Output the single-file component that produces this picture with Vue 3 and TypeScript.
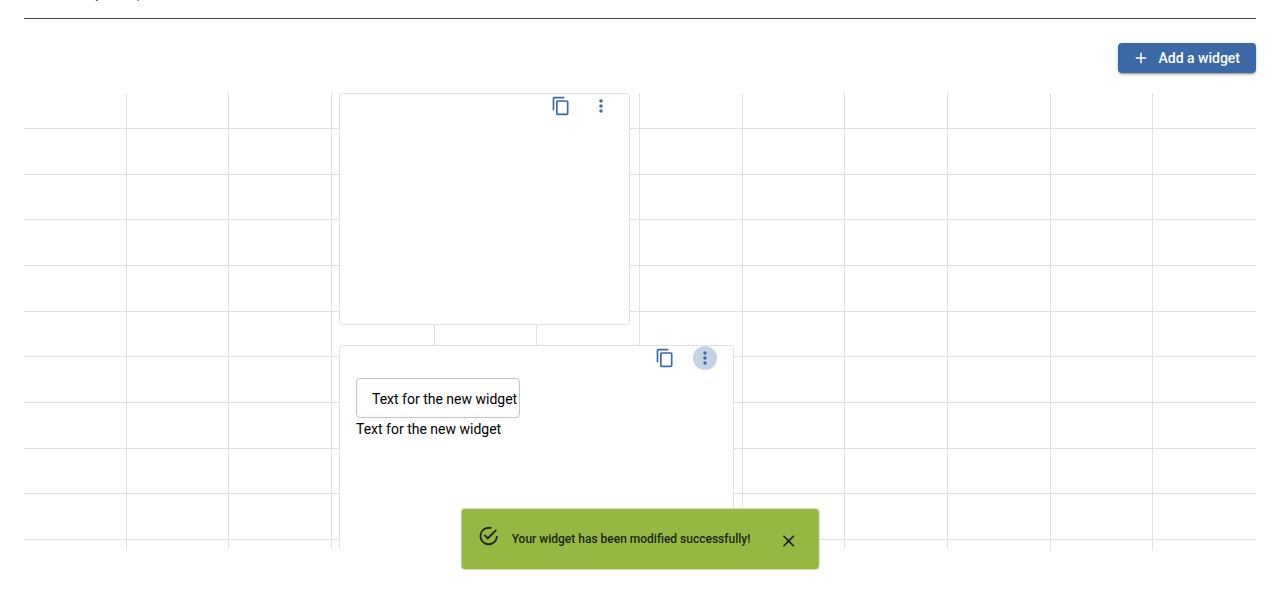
<script setup lang="ts">
import { ref } from 'vue'

interface Widget {
  id: number
  size: 'regular' | 'wide'
  text: string
  active: boolean
}

const columnCount = 12
const rowCount = 11

const widgets = ref<Widget[]>([
  { id: 1, size: 'regular', text: '', active: false },
  { id: 2, size: 'wide', text: 'Text for the new widget', active: true },
])
const toastOpen = ref(true)
</script>

<template>
  <main class="page">
    <header class="intro">
      <p class="description">Dashboard my description</p>
    </header>

    <div class="toolbar">
      <button class="add" type="button">
        <svg class="add-icon" viewBox="0 0 24 24" aria-hidden="true">
          <path d="M19 13h-6v6h-2v-6H5v-2h6V5h2v6h6v2z" />
        </svg>
        Add a widget
      </button>
    </div>

    <section class="board" aria-label="Widgets">
      <div class="columns" aria-hidden="true">
        <span v-for="n in columnCount" :key="n" class="column"></span>
      </div>
      <div class="rows" aria-hidden="true">
        <span v-for="n in rowCount" :key="n" class="row"></span>
      </div>
      <div class="widgets">
        <article v-for="w in widgets" :key="w.id" class="widget" :class="w.size">
          <div class="actions">
            <button class="icon-button" type="button" aria-label="Duplicate">
              <svg class="icon" viewBox="0 0 24 24" aria-hidden="true">
                <path d="M16 1H4c-1.1 0-2 .9-2 2v14h2V3h12V1zm3 4H8c-1.1 0-2 .9-2 2v14c0 1.1.9 2 2 2h11c1.1 0 2-.9 2-2V7c0-1.1-.9-2-2-2zm0 16H8V7h11v14z" />
              </svg>
            </button>
            <button class="icon-button" :class="{ active: w.active }" type="button" aria-label="More actions">
              <svg class="icon" viewBox="0 0 24 24" aria-hidden="true">
                <path d="M12 8c1.1 0 2-.9 2-2s-.9-2-2-2-2 .9-2 2 .9 2 2 2zm0 2c-1.1 0-2 .9-2 2s.9 2 2 2 2-.9 2-2-.9-2-2-2zm0 6c-1.1 0-2 .9-2 2s.9 2 2 2 2-.9 2-2-.9-2-2-2z" />
              </svg>
            </button>
          </div>
          <template v-if="w.text">
            <input v-model="w.text" class="field" type="text" aria-label="Widget text" />
            <p class="content">{{ w.text }}</p>
          </template>
        </article>
      </div>
    </section>

    <div v-if="toastOpen" class="toast" role="alert">
      <svg class="toast-icon" viewBox="0 0 24 24" aria-hidden="true">
        <path d="M20,12A8,8 0 0,1 12,20A8,8 0 0,1 4,12A8,8 0 0,1 12,4C12.76,4 13.5,4.11 14.2,4.31L15.77,2.74C14.61,2.26 13.34,2 12,2A10,10 0 0,0 2,12A10,10 0 0,0 12,22A10,10 0 0,0 22,12M7.91,10.08L6.5,11.5L11,16L21,6L19.59,4.58L11,13.17L7.91,10.08Z" />
      </svg>
      <span class="toast-text">Your widget has been modified successfully!</span>
      <button class="toast-close" type="button" aria-label="Close" @click="toastOpen = false">
        <svg class="icon" viewBox="0 0 24 24" aria-hidden="true">
          <path d="M19 6.41L17.59 5 12 10.59 6.41 5 5 6.41 10.59 12 5 17.59 6.41 19 12 13.41 17.59 19 19 17.59 13.41 12z" />
        </svg>
      </button>
    </div>
  </main>
</template>

<style>
body {
  margin: 0;
  background: #fff;
}
</style>

<style scoped>
.page {
  display: flow-root;
  padding: 0 24px;
  font-family: Roboto, "Liberation Sans", sans-serif;
  font-size: 14px;
  line-height: 20px;
  color: #000;
}
button,
input {
  box-sizing: border-box;
  margin: 0;
  font: inherit;
}
button {
  border: 0;
  padding: 0;
  background: none;
  color: inherit;
  cursor: pointer;
}
svg {
  display: block;
  fill: currentColor;
}
.intro {
  display: flow-root;
  padding-bottom: 14px;
  border-bottom: 1px solid #4a4a4a;
}
.description {
  margin: -16px 0 0;
  font-size: 12px;
  color: #4a4a4a;
}
.toolbar {
  display: flex;
  justify-content: flex-end;
  padding: 24px 0 20px;
}
.add {
  display: flex;
  align-items: center;
  height: 30px;
  gap: 8px;
  padding: 0 16px 0 14px;
  border-radius: 4px;
  background: #3d68a6;
  color: #fff;
  font-weight: 500;
  box-shadow: 0 3px 1px -2px rgba(0, 0, 0, 0.2), 0 2px 2px 0 rgba(0, 0, 0, 0.14), 0 1px 5px 0 rgba(0, 0, 0, 0.12);
}
.add-icon {
  width: 18px;
  height: 18px;
}
.board {
  display: grid;
  grid-template-rows: 457px;
  overflow: hidden;
}
.columns,
.rows,
.widgets {
  grid-area: 1 / 1;
  display: grid;
}
.columns,
.widgets {
  grid-template-columns: repeat(12, 1fr);
}
.column:not(:last-child) {
  border-right: 1px solid #e1e1e1;
}
.rows {
  grid-template-rows: 36px repeat(9, 1fr) 10px;
}
.row:not(:last-child) {
  border-bottom: 1px solid #e1e1e1;
}
.widgets {
  grid-template-rows: 232px 232px;
  row-gap: 20px;
}
.widget {
  box-sizing: border-box;
  border: 1px solid #e1e1e1;
  border-radius: 4px;
  padding: 0 16px;
  background: #fff;
}
.regular {
  grid-column: 4 / span 3;
  margin: 0 10px 0 7px;
}
.wide {
  grid-column: 4 / span 4;
  margin: 0 9px 0 7px;
}
.actions {
  display: flex;
  justify-content: flex-end;
  gap: 16px;
  margin-bottom: 8px;
}
.icon-button {
  display: grid;
  place-items: center;
  width: 24px;
  height: 24px;
  border-radius: 50%;
  color: #3d68a6;
}
.icon-button.active {
  background: #c5d2e4;
}
.icon {
  width: 20px;
  height: 20px;
}
.field {
  display: block;
  width: 164px;
  height: 40px;
  padding: 2px 0 0 15px;
  border: 1px solid #c4c4c4;
  border-radius: 4px;
  background: #fff;
  color: #000;
}
.content {
  margin: 1px 0 0;
}
.toast {
  position: fixed;
  bottom: 20px;
  left: 50%;
  transform: translateX(-50%);
  box-sizing: border-box;
  display: flex;
  align-items: flex-start;
  height: 62px;
  padding: 0 20px 0 16px;
  border: 1px solid #d6dcc6;
  border-radius: 4px;
  background: #95b843;
  color: #1b260b;
  white-space: nowrap;
}
.toast-icon {
  width: 22px;
  height: 22px;
  margin: 16px 12px 0 0;
}
.toast-text {
  margin-top: 20px;
  font-size: 12px;
  font-weight: 500;
}
.toast-close {
  margin: 22px 0 0 28px;
}
</style>
